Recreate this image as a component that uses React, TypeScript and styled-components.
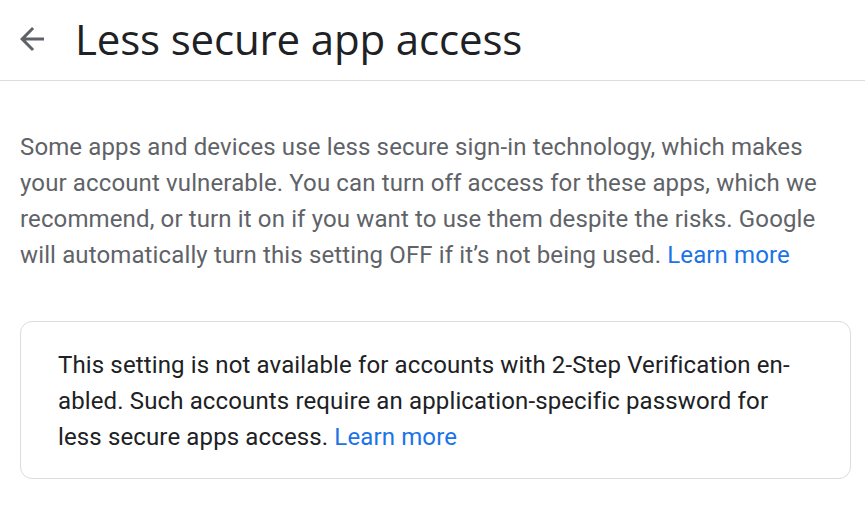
import React from "react";
import styled, { createGlobalStyle } from "styled-components";

const Global = createGlobalStyle`
  html, body { margin: 0; padding: 0; background: #ffffff; }
  body { font-family: Roboto, "Liberation Sans", Arial, sans-serif; }
  * { box-sizing: border-box; }
`;

const Page = styled.div`
  width: 865px;
  display: flex;
  flex-direction: column;
`;

const Header = styled.header`
  height: 81px;
  display: flex;
  align-items: center;
  padding-left: 14px;
  border-bottom: 1px solid #dadce0;
`;

const BackButton = styled.button`
  width: 36px;
  height: 36px;
  padding: 0;
  border: none;
  background: transparent;
  display: flex;
  align-items: center;
  justify-content: center;
  cursor: pointer;
  margin-top: -2px;
  color: #5f6368;
`;

const Title = styled.h1`
  margin: -4px 0 0 25px;
  font-family: "Open Sans", "Noto Sans", sans-serif;
  font-weight: 400;
  font-size: 42px;
  color: #202124;
  letter-spacing: -0.15px;
`;

const Content = styled.main`
  padding: 48px 14px 0 20px;
  display: flex;
  flex-direction: column;
  gap: 48px;
`;

const Intro = styled.p`
  margin: 0;
  font-size: 24px;
  line-height: 36px;
  letter-spacing: 0.13px;
  color: #5f6368;
`;

const Link = styled.a`
  color: #1a73e8;
  text-decoration: none;
`;

const Card = styled.div`
  border: 1px solid #dadce0;
  border-radius: 12px;
  padding: 25px 37px 23px 37px;
`;

const CardText = styled.p`
  margin: 0;
  font-size: 24px;
  line-height: 36px;
  letter-spacing: 0.13px;
  color: #202124;
`;

export default function App() {
  return (
    <Page>
      <Global />
      <Header>
        <BackButton aria-label="Back">
          <svg width="36" height="36" viewBox="0 0 24 24" fill="currentColor">
            <path d="M20 11H7.83l5.59-5.59L12 4l-8 8 8 8 1.41-1.41L7.83 13H20v-2z" />
          </svg>
        </BackButton>
        <Title>Less secure app access</Title>
      </Header>
      <Content>
        <Intro>
          Some apps and devices use less secure sign-in technology, which makes your account
          vulnerable. You can turn off access for these apps, which we recommend, or turn it on
          if you want to use them despite the risks. Google will automatically turn this setting
          OFF if it’s not being used. <Link href="#">Learn more</Link>
        </Intro>
        <Card>
          <CardText>
            This setting is not available for accounts with 2-Step Verification en{"\u00AD"}abled.
            Such accounts require an application-specific password for less secure apps access.{" "}
            <Link href="#">Learn more</Link>
          </CardText>
        </Card>
      </Content>
    </Page>
  );
}
